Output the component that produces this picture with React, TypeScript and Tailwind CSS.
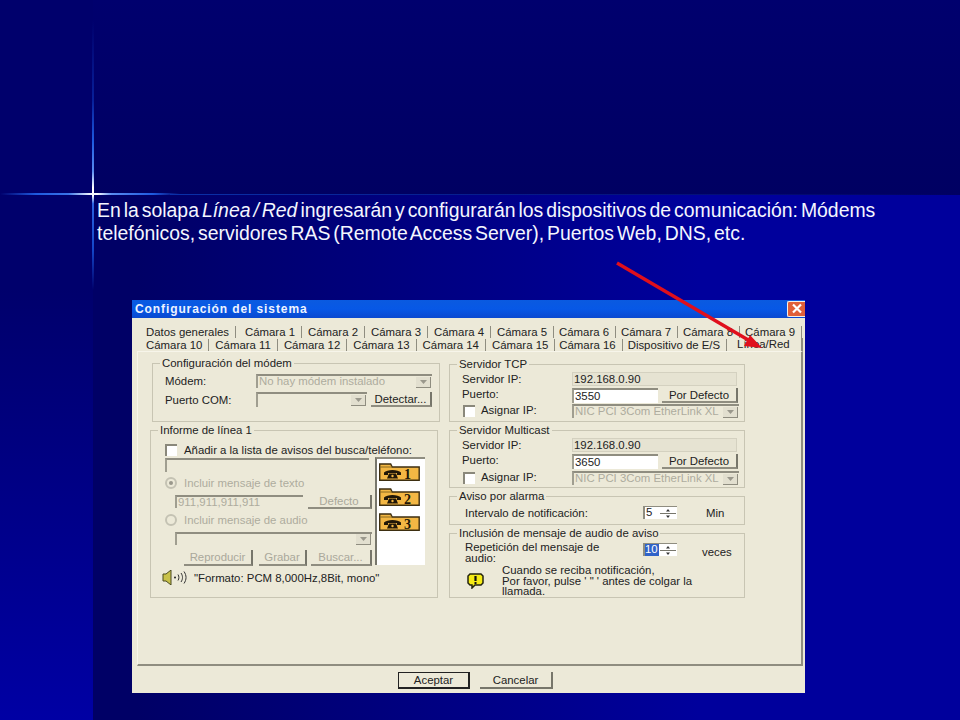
const FONT = { fontFamily: '"Liberation Sans", Arial, sans-serif' };

function Group({ title, className, children }: { title: string; className: string; children: React.ReactNode }) {
  return (
    <div className={`relative shrink-0 border border-[#c8c5b3] ${className}`}>
      <span className="absolute -top-[7px] left-[7px] bg-[#ece9d8] px-[2px] leading-[12px] whitespace-nowrap text-[#222]">{title}</span>
      {children}
    </div>
  );
}

function Btn({ children, w, h = 'h-[15px]', disabled }: { children: React.ReactNode; w: string; h?: string; disabled?: boolean }) {
  return (
    <div className={`flex ${h} ${w} shrink-0 items-center justify-center border-r-2 border-b-2 border-r-[#77766b] border-b-[#8f8d80] whitespace-nowrap ${disabled ? 'text-[#aaa89b]' : 'text-[#222]'}`}>
      {children}
    </div>
  );
}

function Sunken({ children, className, disabled }: { children?: React.ReactNode; className: string; disabled?: boolean }) {
  return (
    <div className={`flex shrink-0 items-center border-t-2 border-l-2 border-t-[#8f8d80] border-l-[#a09e90] px-[1px] leading-none whitespace-nowrap ${disabled ? 'text-[#aeac9e]' : 'text-[#222]'} ${className}`}>
      {children}
    </div>
  );
}

function Arrow() {
  return (
    <div className="ml-auto flex h-[11px] w-[15px] shrink-0 items-center justify-center border-r border-b border-[#8f8d80] bg-[#e2dfcf]">
      <svg width="7" height="4" viewBox="0 0 7 4"><path d="M0 0h7L3.500 4z" fill="#9a988c" /></svg>
    </div>
  );
}

function Check() {
  return <div className="h-[12px] w-[12px] shrink-0 border-t-2 border-l-2 border-t-[#8a887b] border-l-[#8a887b] bg-white" />;
}

function Spin({ value, selected }: { value: string; selected?: boolean }) {
  return (
    <div className="flex h-[13px] w-[34px] shrink-0 items-center border-t border-l-2 border-[#8f8d80] bg-white leading-none text-[#222]">
      <span className={selected ? 'w-[14px] bg-[#2f62c8] text-white' : 'w-[14px] pl-[1px]'}>{value}</span>
      <svg width="16" height="11" viewBox="0 0 16 11" className="mr-[1px] ml-auto">
        <path d="M0 5.500h16" stroke="#77766b" strokeWidth="1" />
        <path d="M8 1l2 2.500H6zM8 10l2-2.500H6z" fill="#333" />
      </svg>
    </div>
  );
}

function Folder({ n }: { n: string }) {
  return (
    <svg width="41" height="18" viewBox="0 0 41 18" className="block shrink-0">
      <path d="M.700 17.300V1h11l1.500 3h27v13.300z" fill="#f3b744" stroke="#3d2e10" strokeWidth="1.400" />
      <path d="M1 4h12" stroke="#8a6a20" strokeWidth="1" />
      <path d="M5 9.500c3-3.500 14-3.500 17 0v2.500h-4v-2H9v2H5z" fill="#201708" />
      <path d="M8 15.500l2-5h7l2 5z" fill="#201708" />
      <circle cx="13.500" cy="13" r="1.200" fill="#f3b744" />
      <text x="25" y="15.500" fontFamily="Liberation Serif, serif" fontWeight="700" fontSize="14" fill="#201708">{n}</text>
    </svg>
  );
}

function Speaker() {
  return (
    <svg width="25" height="15" viewBox="0 0 25 15" className="shrink-0">
      <path d="M1 4h3l5-4v15l-5-4H1z" fill="#c9c24a" stroke="#4a4a20" />
      <circle cx="13" cy="7.500" r="1" fill="#222" />
      <path d="M16 4.500c1.200 2 1.200 4 0 6M19 3c2 3 2 6 0 9M22 1.500c2.700 4 2.700 8 0 12" fill="none" stroke="#333" />
    </svg>
  );
}

function Warn() {
  return (
    <svg width="17" height="16" viewBox="0 0 17 16" className="shrink-0">
      <path d="M3 1h11l2 2v7l-2 2H8l-3 3v-3H3l-2-2V3z" fill="#f6ec17" stroke="#242410" strokeWidth="1.500" />
      <path d="M8.500 3v5" stroke="#111" strokeWidth="2.200" />
      <path d="M8.500 9v2" stroke="#111" strokeWidth="2" />
    </svg>
  );
}

const row1 = ['Datos generales', 'Cámara 1', 'Cámara 2', 'Cámara 3', 'Cámara 4', 'Cámara 5', 'Cámara 6', 'Cámara 7', 'Cámara 8', 'Cámara 9'];
const row2 = ['Cámara 10', 'Cámara 11', 'Cámara 12', 'Cámara 13', 'Cámara 14', 'Cámara 15', 'Cámara 16', 'Dispositivo de E/S'];

function ServerGroup({ title, port, gap, last }: { title: string; port: string; gap: string; last: string }) {
  return (
    <Group title={title} className="h-[58px] w-[296px] pt-[7px] pl-[12px] text-[#222]">
      <div className="flex h-[14px] items-center">
        <span className="-mt-[1px] w-[110px]">Servidor IP:</span>
        <div className="flex h-[14px] w-[165px] items-center border border-[#d4d1c0] bg-[#e6e3d2] pl-[1px]">192.168.0.90</div>
      </div>
      <div className={`flex h-[15px] items-center ${gap}`}>
        <span className="-mt-[3px] w-[110px]">Puerto:</span>
        <Sunken className="h-[15px] w-[86px] bg-white">{port}</Sunken>
        <div className="ml-[4px]"><Btn w="w-[76px]">Por Defecto</Btn></div>
      </div>
      <div className={`flex h-[14px] items-center ${last}`}>
        <div className="ml-[1px]"><Check /></div>
        <span className="-mt-[2px] ml-[6px] w-[91px]">Asignar IP:</span>
        <Sunken disabled className="h-[14px] w-[167px]">
          <span>NIC PCI 3Com EtherLink XL</span>
          <Arrow />
        </Sunken>
      </div>
    </Group>
  );
}

export default function App() {
  return (
    <div style={FONT} className="relative flex h-[720px] w-[960px] overflow-hidden bg-[#000066]">
      <div className="h-full w-[93px] shrink-0 bg-gradient-to-b from-[#00006c] from-40% to-[#0000a4]" />
      <div className="flex min-w-0 flex-1 flex-col">
        <div className="h-[195px] bg-gradient-to-b from-[#00006e] to-[#000062]" />
        <div className="flex-1 bg-gradient-to-r from-[#000066] from-5% to-[#00009c] to-70% pl-[39px]">
          <p className="-ml-[35px] pt-[4px] text-[19.400px] leading-[23px] whitespace-nowrap text-[#f4f6ff] [word-spacing:-2.400px]">
            En la solapa <em>Línea / Red</em> ingresarán y configurarán los dispositivos de comunicación: Módems
            <br />
            telefónicos, servidores RAS (Remote Access Server), Puertos Web, DNS, etc.
          </p>

          <div className="mt-[55px] flex h-[393px] w-[673px] flex-col bg-[#ece9d8] text-[11.400px] leading-[12px] text-[#222]">
            <div className="flex h-[18px] shrink-0 items-center bg-gradient-to-b from-[#0a5ae0] via-[#0758e6] to-[#0a49d0] pl-[3px]">
              <span className="text-[12px] font-bold tracking-[0.9px] text-[#eef3ff]">Configuración del sistema</span>
              <div className="mt-[-1px] ml-auto flex h-[16px] w-[18px] items-center justify-center rounded-l-[2px] border border-r-0 border-[#f3f0e8] bg-[#e0603a]">
                <svg width="12" height="11" viewBox="0 0 12 11"><path d="M2 1.500l8 8M10 1.500l-8 8" stroke="#fff" strokeWidth="2.200" /></svg>
              </div>
            </div>

            <div className="mr-[2px] flex flex-col pt-[7px] pl-[14px]">
              <div className="flex h-[13px] items-center">
                {row1.map((t) => (
                  <span key={t} className="mr-[6px] border-r border-[#8f8d80] pr-[6px] whitespace-nowrap first:mr-[9px] [&:nth-child(n+6)]:mr-[5px]">{t}</span>
                ))}
              </div>
              <div className="flex h-[13px] items-center border-r-2 border-[#8f8d80]">
                {row2.map((t) => (
                  <span key={t} className="mr-[6px] border-r border-[#8f8d80] pr-[6px] whitespace-nowrap [&:nth-child(6)]:mr-[4px] [&:nth-child(7)]:mr-[5px]">{t}</span>
                ))}
                <span className="-mt-[2px] ml-[4px] whitespace-nowrap">Línea/Red</span>
              </div>
            </div>

            <div className="mr-[2px] ml-[5px] flex h-[315px] shrink-0 border-t border-r-2 border-b-2 border-l border-t-[#f7f5ea] border-r-[#8f8d80] border-b-[#8f8d80] border-l-[#f7f5ea] pt-[11px] pl-[14px]">
              <div className="flex w-[288px] shrink-0 flex-col">
                <Group title="Configuración del módem" className="h-[59px] w-[288px] pt-[10px] pl-[12px]">
                  <div className="flex h-[14px] items-center">
                    <span className="w-[91px]">Módem:</span>
                    <Sunken disabled className="h-[14px] w-[176px]">
                      <span>No hay módem instalado</span>
                      <Arrow />
                    </Sunken>
                  </div>
                  <div className="mt-[4px] flex h-[15px] items-center">
                    <span className="w-[91px]">Puerto COM:</span>
                    <Sunken disabled className="h-[15px] w-[111px]"><Arrow /></Sunken>
                    <div className="ml-[4px]"><Btn w="w-[61px]">Detectar...</Btn></div>
                  </div>
                </Group>

                <Group title="Informe de línea 1" className="mt-[8px] -ml-[2px] h-[168px] w-[288px] pt-[13px] pl-[14px]">
                  <div className="flex">
                    <div className="w-[210px] shrink-0">
                      <div className="flex h-[12px] items-center">
                        <Check />
                        <span className="-mt-[1px] ml-[7px] whitespace-nowrap">Añadir a la lista de avisos del busca/teléfono:</span>
                      </div>
                      <Sunken disabled className="mt-[2px] h-[14px] w-[204px]" />
                      <div className="mt-[5px] flex h-[12px] items-center text-[#aeac9e]">
                        <span className="flex h-[12px] w-[12px] items-center justify-center rounded-full border-2 border-[#c4c2b3]"><span className="h-[4px] w-[4px] rounded-full bg-[#9a988c]" /></span>
                        <span className="ml-[7px]">Incluir mensaje de texto</span>
                      </div>
                      <div className="mt-[6px] flex items-start pl-[10px]">
                        <Sunken disabled className="h-[13px] w-[128px]">911,911,911,911</Sunken>
                        <div className="ml-[5px]"><Btn disabled h="h-[14px]" w="w-[64px]">Defecto</Btn></div>
                      </div>
                      <div className="mt-[5px] flex h-[12px] items-center text-[#aeac9e]">
                        <span className="h-[12px] w-[12px] rounded-full border-2 border-[#c4c2b3]" />
                        <span className="ml-[7px]">Incluir mensaje de audio</span>
                      </div>
                      <Sunken disabled className="mt-[6px] ml-[10px] h-[13px] w-[197px]"><Arrow /></Sunken>
                      <div className="mt-[5px] flex pl-[19px]">
                        <Btn disabled h="h-[16px]" w="w-[69px]">Reproducir</Btn>
                        <div className="ml-[6px]"><Btn disabled h="h-[16px]" w="w-[48px]">Grabar</Btn></div>
                        <div className="ml-[4px]"><Btn disabled h="h-[16px]" w="w-[61px]">Buscar...</Btn></div>
                      </div>
                    </div>
                    <div className="mt-[13px] flex h-[108px] w-[50px] shrink-0 flex-col gap-[7px] border-t-2 border-l-2 border-t-[#8f8d80] border-l-[#77766b] bg-white pt-[4px] pl-[2px]">
                      <Folder n="1" />
                      <Folder n="2" />
                      <Folder n="3" />
                    </div>
                  </div>
                  <div className="mt-[4px] -ml-[3px] flex h-[15px] items-center">
                    <Speaker />
                    <span className="ml-[7px] whitespace-nowrap">"Formato: PCM 8,000Hz,8Bit, mono"</span>
                  </div>
                </Group>
              </div>

              <div className="ml-[9px] flex w-[296px] shrink-0 flex-col pt-[1px]">
                <ServerGroup title="Servidor TCP" port="3550" gap="mt-[2px]" last="mt-[1px]" />
                <div className="mt-[8px]">
                  <ServerGroup title="Servidor Multicast" port="3650" gap="mt-[2px]" last="mt-[2px]" />
                </div>
                <Group title="Aviso por alarma" className="mt-[8px] h-[29px] w-[296px]">
                  <div className="flex items-center pt-[9px] pl-[15px]">
                    <span className="w-[178px]">Intervalo de notificación:</span>
                    <Spin value="5" />
                    <span className="ml-[29px]">Min</span>
                  </div>
                </Group>
                <Group title="Inclusión de mensaje de audio de aviso" className="mt-[8px] h-[65px] w-[296px]">
                  <div className="mt-[8px] flex h-[22px] items-start pl-[15px]">
                    <span className="w-[178px] leading-[10.500px]">Repetición del mensaje de<br />audio:</span>
                    <div className="mt-[1px]"><Spin value="10" selected /></div>
                    <span className="mt-[4px] ml-[25px]">veces</span>
                  </div>
                  <div className="mt-[1px] flex items-center pl-[17px]">
                    <Warn />
                    <span className="ml-[18px] leading-[10.500px] whitespace-nowrap">Cuando se reciba notificación,<br />Por favor, pulse ' " ' antes de colgar la<br />llamada.</span>
                  </div>
                </Group>
              </div>
            </div>

            <div className="flex flex-1 items-start justify-center gap-[10px] pt-[6px] pl-[14px]">
              <div className="flex h-[17px] w-[72px] items-center justify-center border border-r-2 border-b-2 border-[#222]">Aceptar</div>
              <div className="flex h-[17px] w-[73px] items-center justify-center border-r-2 border-b-2 border-r-[#77766b] border-b-[#77766b]">Cancelar</div>
            </div>
          </div>
        </div>
      </div>

      {/* sparkle on the title rule */}
      <div className="absolute top-[20px] left-[92px] h-[270px] w-[2px] bg-[linear-gradient(to_bottom,transparent_0%,#08209a_30%,#1e5ae0_45%,#5a8cf0_56%,#ffffff_62%,#ffffff_65%,#2a62e0_68%,#1446c8_85%,transparent_100%)]" />
      <div className="absolute top-[193px] left-0 h-[2px] w-[180px] bg-[linear-gradient(to_right,transparent_0%,#1e5ae0_20%,#3a74e8_38%,#f0f4ff_50%,#ffffff_54%,#5a8cf0_62%,#1e5ae0_85%,transparent_100%)]" />
      <div className="absolute top-[194px] left-[170px] h-[1px] w-[790px] bg-gradient-to-r from-[#0a30a8] to-transparent" />

      {/* annotation arrow */}
      <svg className="absolute top-0 left-0" width="960" height="720" viewBox="0 0 960 720">
        <path d="M617 263L750 341" stroke="#e00f1c" strokeWidth="3.400" />
        <path d="M762 348l-18-2 6-11z" fill="#e00f1c" />
      </svg>
    </div>
  );
}
